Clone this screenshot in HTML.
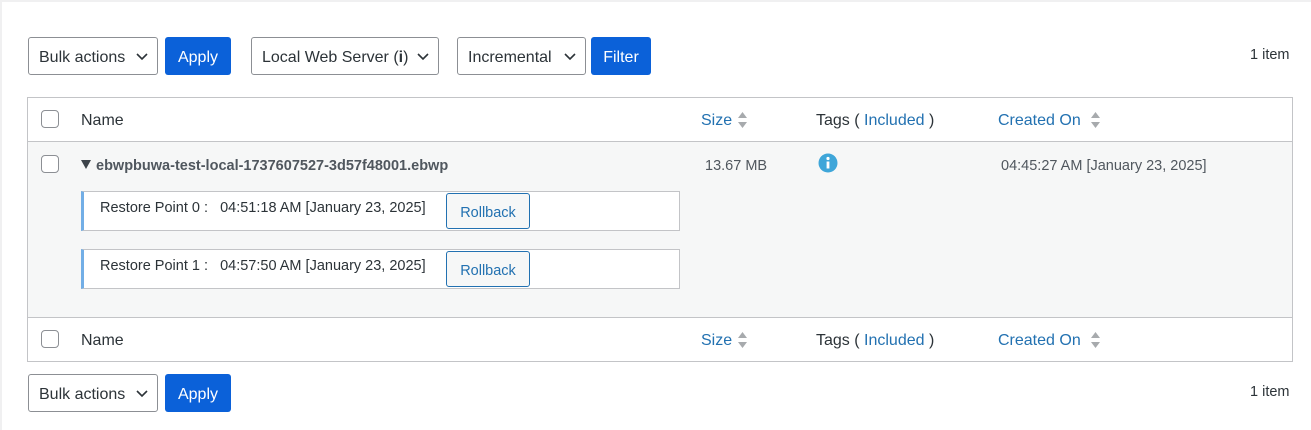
<!DOCTYPE html>
<html><head><style>
*{box-sizing:border-box;margin:0;padding:0}
body{width:1311px;height:430px;background:#fff;font-family:"Liberation Sans",sans-serif;color:#2c3338;position:relative;overflow:hidden}
.a{position:absolute}
.sel{position:absolute;height:38px;border:1px solid #8c8f94;border-radius:3px;background:#fff;font-size:16px;line-height:36px;padding-left:10px;padding-top:2px;color:#2c3338}
.sel svg{position:absolute;right:9px;top:15px}
.btn{position:absolute;height:38px;background:#0b61d9;color:#fff;border-radius:3px;font-size:16px;line-height:38px;padding-top:2px;text-align:center}
.cb{position:absolute;width:18px;height:18px;border:1px solid #8c8f94;border-radius:4px;background:#fff}
.lnk{color:#2271b1}
.rp{position:absolute;left:81px;width:599px;height:40px;background:#fff;border:1px solid #c3c4c7;border-left:3px solid #72aee6;font-size:14.5px}
.rb{position:absolute;left:362px;top:1px;width:84px;height:36px;border:1px solid #2271b1;border-radius:3px;background:#f6f7f7;color:#2271b1;font-size:14.5px;line-height:34px;padding-top:2px;text-align:center}
</style></head><body>
<div class="a" style="left:0;top:0;width:1311px;height:2px;background:#f0f0f1"></div>
<div class="a" style="left:0;top:0;width:2px;height:430px;background:#f0f0f1"></div>
<div class="sel" style="left:28px;top:37px;width:130px">Bulk actions<svg width="12" height="8"><path d="M1 1l5 5 5-5" stroke="#2c3338" stroke-width="1.6" fill="none"/></svg></div>
<div class="btn" style="left:165px;top:37px;width:66px">Apply</div>
<div class="sel" style="left:251px;top:37px;width:188px">Local Web Server (<b>i</b>)<svg width="12" height="8"><path d="M1 1l5 5 5-5" stroke="#2c3338" stroke-width="1.6" fill="none"/></svg></div>
<div class="sel" style="left:457px;top:37px;width:129px">Incremental<svg width="12" height="8"><path d="M1 1l5 5 5-5" stroke="#2c3338" stroke-width="1.6" fill="none"/></svg></div>
<div class="btn" style="left:591px;top:37px;width:60px">Filter</div>
<div class="a" style="left:1250px;top:47px;font-size:14.5px">1 item</div>

<div class="a" style="left:27px;top:97px;width:1266px;height:265px;border:1px solid #c3c4c7;background:#fff"></div>
<div class="a" style="left:28px;top:141px;width:1264px;height:177px;background:#f6f7f7;border-top:1px solid #c3c4c7;border-bottom:1px solid #c3c4c7"></div>

<div class="cb" style="left:41px;top:110px"></div>
<div class="a" style="left:81px;top:112px;font-size:16px">Name</div>
<div class="a lnk" style="left:701px;top:112px;font-size:16px">Size</div>
<svg class="a" style="left:737px;top:111px" width="11" height="18"><path d="M5.5 1L10 7H1z M5.5 17L10 11H1z" fill="#a7aaad"/></svg>
<div class="a" style="left:816px;top:112px;font-size:16px">Tags ( <span class="lnk">Included</span> )</div>
<div class="a lnk" style="left:998px;top:112px;font-size:16px">Created On</div>
<svg class="a" style="left:1090px;top:111px" width="11" height="18"><path d="M5.5 1L10 7H1z M5.5 17L10 11H1z" fill="#a7aaad"/></svg>

<div class="cb" style="left:41px;top:155px"></div>
<svg class="a" style="left:81px;top:160px" width="10" height="9"><path d="M0 0h10L5 9z" fill="#3c434a"/></svg>
<div class="a" style="left:96px;top:158px;font-size:14.5px;font-weight:bold;color:#50575e">ebwpbuwa-test-local-1737607527-3d57f48001.ebwp</div>
<div class="a" style="left:705px;top:158px;font-size:14.5px;color:#50575e">13.67 MB</div>
<svg class="a" style="left:818px;top:153px" width="20" height="20"><circle cx="10" cy="10" r="9.5" fill="#3fa6d9"/><circle cx="10" cy="5.5" r="1.6" fill="#fff"/><rect x="8.6" y="8.5" width="2.8" height="7" fill="#fff"/></svg>
<div class="a" style="left:1001px;top:158px;font-size:14.5px;color:#50575e">04:45:27 AM [January 23, 2025]</div>

<div class="rp" style="top:191px"><span class="a" style="left:16px;top:8px">Restore Point 0 :&nbsp;&nbsp; 04:51:18 AM [January 23, 2025]</span><div class="rb">Rollback</div></div>
<div class="rp" style="top:249px"><span class="a" style="left:16px;top:8px">Restore Point 1 :&nbsp;&nbsp; 04:57:50 AM [January 23, 2025]</span><div class="rb">Rollback</div></div>

<div class="cb" style="left:41px;top:330px"></div>
<div class="a" style="left:81px;top:332px;font-size:16px">Name</div>
<div class="a lnk" style="left:701px;top:332px;font-size:16px">Size</div>
<svg class="a" style="left:737px;top:331px" width="11" height="18"><path d="M5.5 1L10 7H1z M5.5 17L10 11H1z" fill="#a7aaad"/></svg>
<div class="a" style="left:816px;top:332px;font-size:16px">Tags ( <span class="lnk">Included</span> )</div>
<div class="a lnk" style="left:998px;top:332px;font-size:16px">Created On</div>
<svg class="a" style="left:1090px;top:331px" width="11" height="18"><path d="M5.5 1L10 7H1z M5.5 17L10 11H1z" fill="#a7aaad"/></svg>

<div class="sel" style="left:28px;top:374px;width:130px">Bulk actions<svg width="12" height="8"><path d="M1 1l5 5 5-5" stroke="#2c3338" stroke-width="1.6" fill="none"/></svg></div>
<div class="btn" style="left:165px;top:374px;width:66px">Apply</div>
<div class="a" style="left:1250px;top:384px;font-size:14.5px">1 item</div>
</body></html>
